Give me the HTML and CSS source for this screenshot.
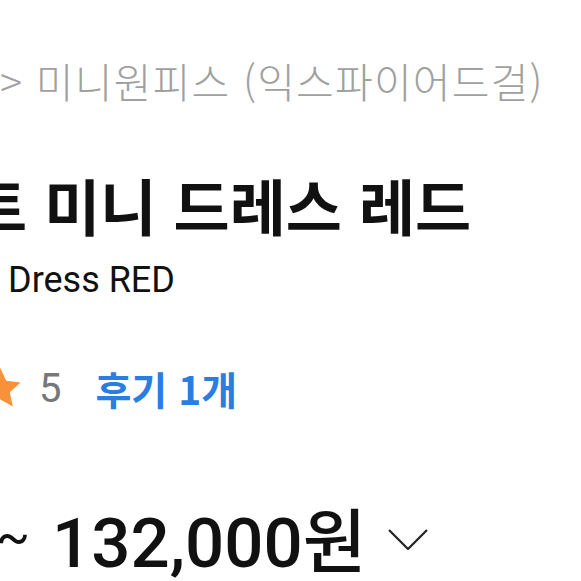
FILE: index.html
```html
<!DOCTYPE html>
<html lang="ko">
<head>
<meta charset="utf-8">
<link rel="stylesheet" href="styles.css">
</head>
<body>
<main class="page">
  <nav class="crumb">&gt; 미니원피스 (익스파이어드걸)</nav>
  <h1 class="title">트 미니 드레스 레드</h1>
  <p class="en">Dress RED</p>
  <div class="rating">
    <svg class="star" viewBox="0 0 24 24" width="48" height="48"><path d="M12 1.8l3.1 6.6 7.2.8-5.4 4.9 1.5 7.1L12 17.6l-6.4 3.6 1.5-7.1L1.7 9.2l7.2-.8z" fill="#f7923a"/></svg>
    <span class="score">5</span>
    <a class="reviews">후기 1개</a>
  </div>
  <div class="price">
    <span class="tilde">~</span>
    <span class="amount">132,000원</span>
    <svg class="chev" viewBox="0 0 40 22" width="40" height="22"><path d="M1 2l19 19L39 2" fill="none" stroke="#222" stroke-width="2.2"/></svg>
  </div>
</main>
</body>
</html>
```
FILE: styles.css
```css
html, body {
  margin: 0;
  padding: 0;
  background: #fff;
}
body {
  width: 581px;
  height: 581px;
  overflow: hidden;
  font-family: Roboto, "Noto Sans CJK KR", sans-serif;
}
.page {
  display: flex;
  flex-direction: column;
  white-space: nowrap;
}
.crumb {
  margin-top: 50px;
  height: 60px;
  line-height: 60px;
  font-size: 41px;
  letter-spacing: 1.2px;
  color: #a0a0a0;
  font-family: "Noto Sans CJK KR", sans-serif;
  font-weight: 300;
}
.title {
  margin: 55px 0 0 -29px;
  height: 80px;
  line-height: 80px;
  font-size: 61px;
  font-weight: 700;
  color: #111;
  font-family: "Noto Sans CJK KR", sans-serif;
}
.en {
  margin: 10px 0 0 8px;
  height: 50px;
  line-height: 50px;
  font-size: 36px;
  color: #111;
}
.rating {
  margin-top: 53px;
  height: 60px;
  display: flex;
  align-items: center;
}
.star {
  margin-left: -24px;
}
.score {
  margin-left: 15px;
  font-size: 40px;
  color: #777;
}
.reviews {
  margin-left: 34px;
  font-size: 39px;
  font-weight: 700;
  color: #2a7de1;
  font-family: "Noto Sans CJK KR", sans-serif;
}
.price {
  margin-top: 74px;
  height: 90px;
  display: flex;
  align-items: center;
  color: #111;
}
.tilde {
  margin-left: -4px;
  font-size: 50px;
}
.amount {
  margin-left: 22px;
  font-size: 69px;
  font-weight: 500;
}
.chev {
  margin-left: 22px;
  margin-top: 4px;
}
```
